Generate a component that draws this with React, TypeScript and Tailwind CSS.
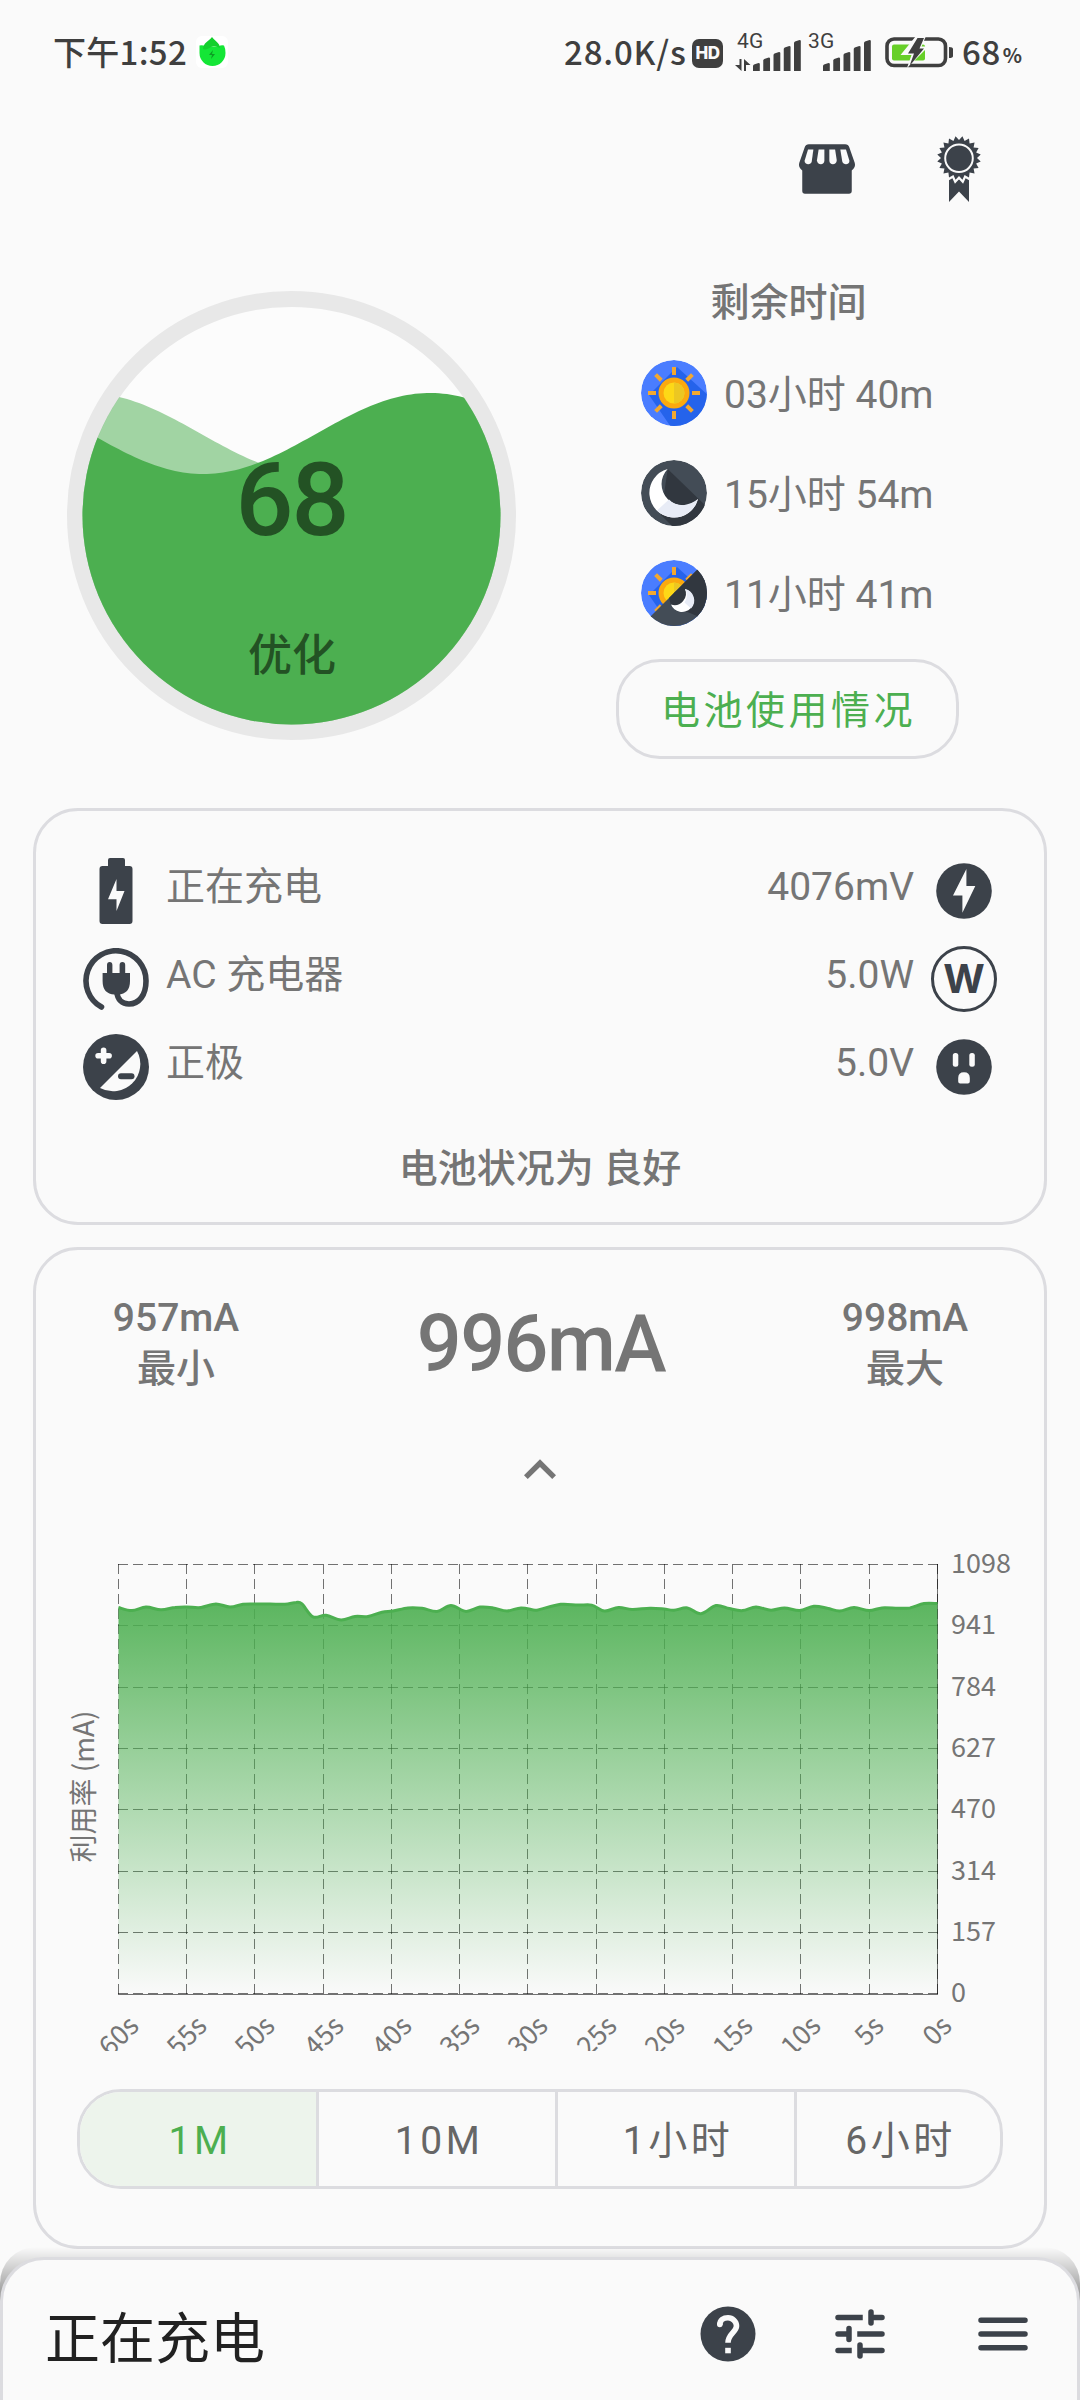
import type { ReactNode } from 'react';
import { clsx } from 'clsx';

const INK = '#3c424a';
const PAPER = '#fafafa';
const GREEN = '#4caf50';

const remaining: { icon: ReactNode; text: string }[] = [
  { icon: <DayIcon />, text: '03小时 40m' },
  { icon: <NightIcon />, text: '15小时 54m' },
  { icon: <DayNightIcon />, text: '11小时 41m' },
];

const details: { left: ReactNode; label: string; value: string; right: ReactNode }[] = [
  { left: <BatteryIcon />, label: '正在充电', value: '4076mV', right: <BoltIcon /> },
  { left: <PlugIcon />, label: 'AC 充电器', value: '5.0W', right: <WattIcon /> },
  { left: <PolarityIcon />, label: '正极', value: '5.0V', right: <OutletIcon /> },
];

const ranges = [
  { label: '1M', className: 'w-[236px]' },
  { label: '10M', className: 'w-[239px] border-l-[3px]' },
  { label: '1小时', className: 'w-[239px] border-l-[3px]' },
  { label: '6小时', className: 'flex-1 border-l-[3px]' },
];

/* ---------- Status bar ---------- */

function SignalBars() {
  const tops = [23, 17.5, 12, 6, 0];
  return (
    <svg width="48" height="31" viewBox="0 0 48 31" fill="#3f3f3f">
      {tops.map((top, i) => {
        const x = i * 10.25;
        return <path key={i} d={`M${x} 31V${top + 3}q0-1 1-1.5l4.5-1.5q1.3 0 1.3 1V31z`} />;
      })}
    </svg>
  );
}

function StatusBar() {
  return (
    <div className="h-[102px] flex items-center justify-between pl-[53px] pr-[58px] text-[#3f3f3f] font-medium text-[33px] leading-[40px] font-['Noto_Sans_CJK_SC',sans-serif]">
      <div className="flex items-center">
        <span className="w-[143px] whitespace-nowrap tracking-[0.3px]">下午1:52</span>
        <svg width="32" height="32" viewBox="0 0 32 32" className="mt-0.5">
          <rect width="32" height="32" rx="6" fill="#fff" />
          <path d="M3.5 9.5q3-1 6 1l13 0q3-2 5.500-1 1.500 3 1.500 7.500a13 13 0 0 1-26 0q0-4.500 0-7.500z" fill="#14e636" />
          <path d="M16 1c3 4 8 6 8 11-2-1-6-3-9-1s-6 3-8 2C7 7 13 5 16 1z" fill="#12d02c" />
          <path d="M17 14l-4 5h3l-1 4 4-5h-3z" fill="#0c9e24" />
        </svg>
      </div>
      <div className="flex items-center">
        <span className="w-[128px] whitespace-nowrap tracking-[0.8px]">28.0K/s</span>
        <span className="w-[31px] h-[29px] mt-1 rounded-[7px] bg-[#3f3f3f] text-[#fafafa] text-[17px] leading-[29px] tracking-[-0.5px] font-extrabold text-center font-['Inter',sans-serif]">
          HD
        </span>
        <div className="ml-3 mt-1 h-[36px] flex items-end relative">
          <span className="absolute left-[2px] top-[-4px] text-[21px] leading-[20px] font-[Roboto,sans-serif] font-normal">4G</span>
          <svg width="16" height="12" viewBox="0 0 16 12" fill="#3f3f3f" className="mr-[2px]">
            <path d="M4.500 0h2v12L0 6h4.500zM9 0l6.500 6H11v6H9z" />
          </svg>
          <SignalBars />
        </div>
        <div className="ml-[7px] mt-1 h-[36px] flex items-end relative">
          <span className="absolute left-0 top-[-4px] text-[21px] leading-[20px] font-[Roboto,sans-serif] font-normal">3G</span>
          <span className="w-[15px]" />
          <SignalBars />
        </div>
        <svg width="69" height="32" viewBox="0 0 69 32" className="ml-[14px] mt-0.5">
          <rect x="2" y="3" width="58.500" height="26.500" rx="7" fill="none" stroke="#3f3f3f" strokeWidth="3.600" />
          <rect x="7" y="8.500" width="33" height="16" rx="2" fill="#67cf28" />
          <path d="M64 11q4 0 4 2v7q0 2-4 2z" fill="#3f3f3f" />
          <path d="M31 0h10l-4.500 10.500h7L22 32l4.500-13H15.500z" fill={PAPER} />
          <path d="M32.500 2h6.500l-4.500 10.500H39L24.500 30l4.500-12.500h-6z" fill="#3f3f3f" />
        </svg>
        <span className="ml-[8px] tracking-[0.5px]">68</span>
        <span className="ml-[2px] mt-2 text-[20px] font-bold">%</span>
      </div>
    </div>
  );
}

/* ---------- Header actions ---------- */

function StoreIcon() {
  return (
    <svg width="66" height="66" viewBox="0 0 24 24" fill={INK}>
      <path d="M5.400 3h13.200c.8 0 1.300.4 1.500 1.100l2 5.700c.3 1-.1 2-1.100 2.700V20c0 .7-.4 1-1 1H4c-.6 0-1-.4-1-1v-7.500c-1-.7-1.400-1.700-1.100-2.700l2-5.700C4.100 3.400 4.700 3 5.400 3z" />
      <g fill={PAPER}>
        <path d="M5.100 4.900h1.950L6.450 9.300c-.3 1.500-2.700 1.200-2.600-.3z" />
        <path d="M8.950 4.900h2.100v4c0 1.900-2.700 1.700-2.700-.1z" />
        <path d="M12.850 4.900h2.100l.6 3.900c0 1.800-2.700 2-2.700.1z" />
        <path d="M16.850 4.900h2.050l1.250 4.100c.2 1.500-2.200 1.800-2.600.3z" />
      </g>
    </svg>
  );
}

function starPoints(cx: number, cy: number, outer: number, inner: number, spikes: number) {
  return Array.from({ length: spikes * 2 }, (_, i) => {
    const r = i % 2 === 0 ? inner : outer;
    const a = (Math.PI * i) / spikes - Math.PI / 2;
    return `${(cx + r * Math.cos(a)).toFixed(2)},${(cy + r * Math.sin(a)).toFixed(2)}`;
  }).join(' ');
}

function AwardIcon() {
  const star = starPoints(33, 22, 22, 18, 20);
  return (
    <svg width="66" height="66" viewBox="0 0 66 66" fill={INK}>
      <path d="M23 36h20v30L33 55.500 23 66z" />
      <polygon points={star} stroke={PAPER} strokeWidth="4.500" />
      <polygon points={star} />
      <circle cx="33" cy="22.300" r="13.800" stroke={PAPER} strokeWidth="2" />
    </svg>
  );
}

/* ---------- Battery gauge ---------- */

// Horizontal sine wave filled down to the bottom of the gauge
function wavePath(crestX: number) {
  let d = '';
  for (let x = 0; x <= 449; x += 4) {
    const y = 142.500 - 40.500 * Math.cos(((x - crestX) / 226.700) * Math.PI);
    d += `${x === 0 ? 'M' : 'L'}${x} ${y.toFixed(2)}`;
  }
  return `${d}L449 449L0 449Z`;
}

function Gauge() {
  return (
    <svg width="449" height="449" viewBox="0 0 449 449" className="ml-[67px] mt-[55px] shrink-0">
      <defs>
        <clipPath id="gauge-clip">
          <circle cx="224.500" cy="224.500" r="209" />
        </clipPath>
      </defs>
      <circle cx="224.500" cy="224.500" r="216.500" fill="#fcfcfc" stroke="#e8e8e8" strokeWidth="16" />
      <g clipPath="url(#gauge-clip)">
        <path d={wavePath(20)} fill={GREEN} fillOpacity="0.52" />
        <path d={wavePath(363)} fill={GREEN} />
      </g>
      <g fill="#235224" textAnchor="middle" className="font-[Roboto,'Noto_Sans_CJK_SC',sans-serif] font-medium">
        <text x="224.500" y="244" fontSize="102" letterSpacing="-2">68</text>
        <text x="225" y="379.500" fontSize="44">优化</text>
      </g>
    </svg>
  );
}

/* ---------- Remaining time icons ---------- */

function Sun() {
  return (
    <>
      <circle cx="33" cy="33" r="33" fill="#4a7dff" />
      <path d="M36 7L70 38v32H32L8 35z" fill="#2563eb" />
      {[0, 45, 90, 135, 180, 225, 270, 315].map((a) => (
        <rect key={a} x="31" y="7" width="4" height="8" fill="#f2a830" transform={`rotate(${a} 33 33)`} />
      ))}
      <circle cx="33" cy="33" r="15.500" fill="#fba90f" />
      <circle cx="33" cy="33" r="10.500" fill="#fdd817" />
      <path d="M33 22.500a10.500 10.500 0 0 1 0 21z" fill="#ecc722" />
    </>
  );
}

function DayIcon() {
  return (
    <svg width="66" height="66" viewBox="0 0 66 66">
      <clipPath id="day-clip">
        <circle cx="33" cy="33" r="33" />
      </clipPath>
      <g clipPath="url(#day-clip)">
        <Sun />
      </g>
    </svg>
  );
}

function NightIcon() {
  return (
    <svg width="66" height="66" viewBox="0 0 66 66">
      <clipPath id="night-clip">
        <circle cx="33" cy="33" r="33" />
      </clipPath>
      <g clipPath="url(#night-clip)">
        <circle cx="33" cy="33" r="33" fill="#434c56" />
        <path d="M26.700 9L66 47v22H34L20 55z" fill="#31373f" />
        <path d="M26.700 9A24.700 24.700 0 1 0 57 39A21.200 21.200 0 0 1 26.700 9z" fill="#fff" />
        <path d="M57 39A24.700 24.700 0 0 1 16 50.500L28 39.500Q33 45 42.300 45.200Q51 44 57 39z" fill="#e8ecf6" />
      </g>
    </svg>
  );
}

function DayNightIcon() {
  return (
    <svg width="66" height="66" viewBox="0 0 66 66">
      <clipPath id="mixed-clip">
        <circle cx="33" cy="33" r="33" />
      </clipPath>
      <g clipPath="url(#mixed-clip)">
        <Sun />
        <path d="M66 0v66H0z" fill="#434c56" />
        <path d="M66 0v66L56 56 30 45l3-12z" fill="#31373f" />
        <path d="M33 33l8-6 6 9-8 10-9-1-2-7z" fill="#31373f" />
        <path d="M44 29A11.700 11.700 0 1 1 30 44.500A11.500 11.500 0 0 0 44 29z" fill="#fff" />
        <path d="M44 29A11.700 11.700 0 0 1 50 48.500L43.500 42.500A11.500 11.500 0 0 0 44 29z" fill="#e8ecf6" />
      </g>
    </svg>
  );
}

/* ---------- Detail icons ---------- */

function BatteryIcon() {
  return (
    <svg width="66" height="66" viewBox="0 0 66 66" fill={INK}>
      <path d="M25 8V2q0-2 2-2h13q2 0 2 2v6h4.500q3 0 3 3v52q0 3-3 3h-27q-3 0-3-3V11q0-3 3-3z" />
      <path d="M33.500 21v12h8l-8 20V41.300H25z" fill={PAPER} />
    </svg>
  );
}

function PlugIcon() {
  return (
    <svg width="66" height="66" viewBox="0 0 66 66" fill={INK} className="relative top-0.5">
      <path
        d="M18.500 59A30 30 0 1 1 63 33C63 47 56 56 46 56C39 56 34.500 51.500 33.800 44"
        fill="none"
        stroke={INK}
        strokeWidth="5.600"
        strokeLinecap="round"
      />
      <path d="M19.600 25H24v-8q0-3 2.700-3t2.700 3v8h7.200v-8q0-3 2.800-3t2.800 3v8H47v8q0 13-12 13.500h-3.500Q19.600 46 19.600 33z" />
    </svg>
  );
}

function PolarityIcon() {
  return (
    <svg width="66" height="66" viewBox="0 0 66 66">
      <circle cx="33" cy="33" r="33" fill={INK} />
      <path d="M54 17A27.300 27.300 0 0 1 17 54z" fill={PAPER} />
      <path d="M20.600 16.300v11M15.100 21.800h11" stroke={PAPER} strokeWidth="5.600" strokeLinecap="round" />
      <path d="M38 42.300h10.500" stroke={INK} strokeWidth="6" strokeLinecap="round" />
    </svg>
  );
}

function BoltIcon() {
  return (
    <svg width="66" height="66" viewBox="-5 -5 66 66">
      <circle cx="28" cy="28" r="27.800" fill={INK} />
      <path d="M30.400 6v17h8.900L26.400 49.700V32.400H17z" fill={PAPER} />
    </svg>
  );
}

function WattIcon() {
  return (
    <span className="w-[66px] h-[66px] rounded-full border-[3.500px] border-[#3c424a] flex items-center justify-center text-[#3c424a] text-[40px] leading-none font-bold font-['Inter',sans-serif]">
      W
    </span>
  );
}

function OutletIcon() {
  return (
    <svg width="66" height="66" viewBox="-5 -5 66 66">
      <circle cx="28" cy="28" r="27.800" fill={INK} />
      <g fill={PAPER}>
        <rect x="16.800" y="14" width="5.500" height="13.700" rx="2.500" />
        <rect x="33.300" y="14" width="5.500" height="13.700" rx="2.500" />
        <path d="M22.200 39q0-5.700 5.800-5.700t5.800 5.700v3.500q0 2-2 2h-7.600q-2 0-2-2z" />
      </g>
    </svg>
  );
}

/* ---------- Usage chart ---------- */

const PLOT = { left: 82.5, right: 901.5, top: 62, bottom: 492, max: 1098 };

const gridX = [82.5, 150.5, 218.5, 287.5, 355.5, 423.5, 491.5, 560.5, 628.5, 696.5, 764.5, 833.5, 901.5];
const gridY = [62.5, 123.5, 185.5, 246.5, 307.5, 369.5, 430.5, 491.5];
const yLabels = ['1098', '941', '784', '627', '470', '314', '157', '0'];
const xLabels = ['60s', '55s', '50s', '45s', '40s', '35s', '30s', '25s', '20s', '15s', '10s', '5s', '0s'];

// [x, mA]
const samples: [number, number][] = [
  [82.5, 987], [96, 979], [110, 988], [125, 981], [139, 987], [151, 988], [165, 987], [180, 996],
  [194, 988], [207, 995], [218, 996], [234, 996], [249, 995], [260, 1000], [266, 996], [277, 963],
  [290, 967], [305, 955], [319, 964], [332, 964], [346, 975], [357, 978], [372, 986], [386, 985],
  [401, 977], [415, 992], [430, 977], [444, 988], [457, 986], [471, 978], [485, 986], [499, 980],
  [504, 982], [524.7, 995], [542, 993], [555.7, 993], [568.4, 978], [582.5, 987], [596, 982], [614, 985],
  [628, 983], [638, 980], [651.4, 986], [665, 971], [680, 992], [693.4, 984], [706.5, 979], [720, 988],
  [735, 980], [748.5, 986], [763.6, 979], [777.8, 990], [791.5, 985], [803.6, 978], [818, 987], [833, 979],
  [846, 986], [862, 985], [874, 986], [888, 997], [901.5, 997],
];

function linePath() {
  const pts = samples.map(([x, v]) => [x, PLOT.bottom - (v / PLOT.max) * (PLOT.bottom - PLOT.top)]);
  let d = `M${pts[0][0]} ${pts[0][1].toFixed(1)}`;
  for (let i = 0; i < pts.length - 1; i++) {
    const p0 = pts[i - 1] ?? pts[i];
    const p1 = pts[i];
    const p2 = pts[i + 1];
    const p3 = pts[i + 2] ?? p2;
    const c1 = [p1[0] + (p2[0] - p0[0]) / 6, p1[1] + (p2[1] - p0[1]) / 6];
    const c2 = [p2[0] - (p3[0] - p1[0]) / 6, p2[1] - (p3[1] - p1[1]) / 6];
    d += `C${[...c1, ...c2, ...p2].map((n) => n.toFixed(1)).join(' ')}`;
  }
  return d;
}

function UsageChart() {
  const line = linePath();
  return (
    <svg
      width="1008"
      height="549"
      viewBox="0 0 1008 549"
      className="block font-['Noto_Sans_CJK_SC',sans-serif]"
      fontSize="27"
      fill="#757575"
    >
      <defs>
        <linearGradient id="usage-fill" gradientUnits="userSpaceOnUse" x1="0" y1={PLOT.top} x2="0" y2={PLOT.bottom}>
          <stop offset="0" stopColor={GREEN} />
          <stop offset="1" stopColor={GREEN} stopOpacity="0" />
        </linearGradient>
      </defs>

      <g stroke="#000" strokeOpacity="0.55" strokeWidth="1" shapeRendering="crispEdges">
        {gridY.map((y) => (
          <line key={y} x1={PLOT.left - 0.5} x2={PLOT.right} y1={y} y2={y} strokeDasharray="10 5" />
        ))}
        {gridX.map((x) => (
          <line key={x} x1={x} x2={x} y1={PLOT.top} y2={PLOT.bottom} strokeDasharray="10 5" />
        ))}
        <line x1={PLOT.right} x2={PLOT.right} y1={PLOT.top} y2={PLOT.bottom} />
        <line x1={PLOT.left - 0.5} x2={PLOT.right + 0.5} y1="492.500" y2="492.500" />
      </g>

      <path d={`${line}L${PLOT.right} ${PLOT.bottom}L${PLOT.left} ${PLOT.bottom}Z`} fill="url(#usage-fill)" />
      <path d={line} fill="none" stroke={GREEN} strokeWidth="3" />

      {yLabels.map((label, i) => (
        <text key={label} x="915" y={gridY[i] + 8.5}>
          {label}
        </text>
      ))}
      {xLabels.map((label, i) => (
        <text
          key={label}
          textAnchor="end"
          transform={`translate(${gridX[i] + (label.length === 3 ? 22 : 16)} 525.500) rotate(-45)`}
        >
          {label}
        </text>
      ))}
      <text textAnchor="middle" fontSize="28" transform="translate(57.500 284.500) rotate(-90)">
        利用率 (mA)
      </text>
    </svg>
  );
}

/* ---------- Bottom sheet icons ---------- */

function HelpIcon() {
  return (
    <svg width="66" height="66" viewBox="-5.500 -5.500 66 66">
      <circle cx="27.500" cy="27.500" r="27.500" fill={INK} />
      <path
        d="M19.300 18.500C19.300 13.500 23 11.300 27.500 11.300S36 15 36 19.600C36 25.500 27.500 27.500 27.500 36.300"
        fill="none"
        stroke={PAPER}
        strokeWidth="5.600"
      />
      <circle cx="19.300" cy="18" r="2.800" fill={PAPER} />
      <rect x="24.700" y="41.300" width="5.600" height="5.500" fill={PAPER} />
    </svg>
  );
}

function TuneIcon() {
  return (
    <svg width="66" height="66" viewBox="0 0 24 24" fill={INK}>
      <path d="M4 5h9v2H4a1 1 0 0 1 0-2zM15 4a1 1 0 0 1 2 0v1h3a1 1 0 0 1 0 2h-3v1a1 1 0 0 1-2 0z" />
      <path d="M7 10a1 1 0 0 1 2 0v4a1 1 0 0 1-2 0v-1H4a1 1 0 0 1 0-2h3zM11 11h9a1 1 0 0 1 0 2h-9z" />
      <path d="M4 17h5v2H4a1 1 0 0 1 0-2zM11 16a1 1 0 0 1 2 0v1h7a1 1 0 0 1 0 2h-7v1a1 1 0 0 1-2 0z" />
    </svg>
  );
}

function MenuIcon() {
  return (
    <svg width="66" height="66" viewBox="0 0 24 24" stroke={INK} strokeWidth="2" strokeLinecap="round">
      <path d="M4 7h16M4 12h16M4 17h16" />
    </svg>
  );
}

export default function App() {
  return (
    <div className="w-[1080px] h-[2400px] flex flex-col overflow-hidden bg-[#fafafa] text-[#757575] text-[39px] leading-[50px] font-[Roboto,'Noto_Sans_CJK_SC',sans-serif]">
      <StatusBar />

      {/* Header */}
      <div className="h-[134px] flex items-center justify-end gap-[66px] pr-[88px]">
        <StoreIcon />
        <AwardIcon />
      </div>

      {/* Charge level and remaining time */}
      <div className="h-[572px] flex">
        <Gauge />
        <div className="w-[343px] ml-[100px] pt-[42px]">
          <h2 className="pl-0.5 text-center font-medium">剩余时间</h2>
          <div className="mt-[15px] pl-[25px]">
            {remaining.map((item) => (
              <div key={item.text} className="h-[100px] flex items-center gap-[17px]">
                {item.icon}
                <span className="pt-[3px] whitespace-nowrap">{item.text}</span>
              </div>
            ))}
          </div>
          <button className="mt-4 w-full h-[100px] border-[3px] border-[#dcdce0] rounded-[44px] pt-1 pl-[2px] text-[#4caf50] tracking-[3.500px] whitespace-nowrap">
            电池使用情况
          </button>
        </div>
      </div>

      {/* Battery details */}
      <div className="mx-[33px] h-[417px] shrink-0 border-[3px] border-[#dcdce0] rounded-[45px] pt-9">
        {details.map((row) => (
          <div key={row.label} className="h-[88px] px-[47px] flex items-center gap-[17px]">
            {row.left}
            <span className="flex-1 pb-2">{row.label}</span>
            <span className="pb-2">{row.value}</span>
            {row.right}
          </div>
        ))}
        <p className="mt-8 pt-px text-center font-medium">电池状况为 良好</p>
      </div>

      {/* Current usage */}
      <div className="mx-[33px] mt-[22px] h-[1002px] shrink-0 border-[3px] border-[#dcdce0] rounded-[45px] pt-[43px]">
        <div className="flex items-center text-center font-medium leading-[51px]">
          <div className="w-[280px]">
            <p>957mA</p>
            <p>最小</p>
          </div>
          <p className="flex-1 text-[79px] tracking-[-1.500px]">996mA</p>
          <div className="w-[278px]">
            <p>998mA</p>
            <p>最大</p>
          </div>
        </div>
        <svg width="64" height="64" viewBox="0 0 24 24" fill="#757575" className="mx-auto mt-[43px]">
          <path d="M12 8l-6 6 1.410 1.410L12 10.830l4.590 4.580L18 14z" />
        </svg>
        <UsageChart />
        <div className="mx-[41px] mt-[38px] h-[100px] flex border-[3px] border-[#dcdce0] rounded-[44px] overflow-hidden text-[#666]">
          {ranges.map((range, i) => (
            <button
              key={range.label}
              className={clsx(
                'border-[#dcdce0] pt-[3px] pl-[4px] tracking-[3.500px] whitespace-nowrap',
                range.className,
                i === 0 && 'bg-[#edf4ec] text-[#4caf50]'
              )}
            >
              {range.label}
            </button>
          ))}
        </div>
      </div>

      {/* Bottom sheet */}
      <div className="relative -mt-[2px] pt-[10px] flex-1 rounded-t-[36px] bg-linear-to-b from-black/0 via-black/40 via-[50px] to-black/40">
        <div className="h-full flex items-center border-[3px] border-b-0 border-[#dcdce0] rounded-t-[44px] bg-[#fafafa] pl-[42px] pr-[41px] pt-2">
          <h1 className="flex-1 pt-2.5 text-[55px] leading-[70px] text-[#212121]">正在充电</h1>
          <HelpIcon />
          <span className="w-[66px]" />
          <TuneIcon />
          <span className="w-[77px]" />
          <MenuIcon />
        </div>
      </div>
    </div>
  );
}
